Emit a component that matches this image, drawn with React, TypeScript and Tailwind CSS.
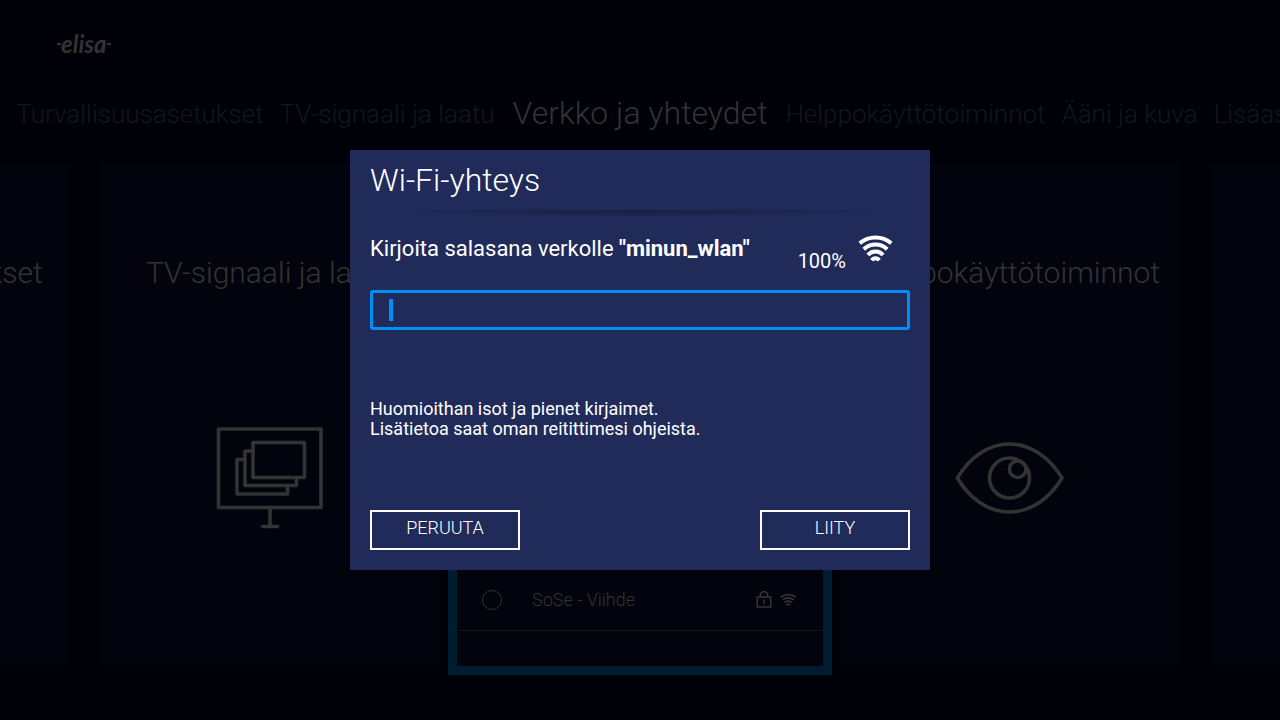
import { useState } from "react";
import type { ReactNode } from "react";
import clsx from "clsx";

const TABS_BEFORE = ["Turvallisuusasetukset", "TV-signaali ja laatu"];
const TABS_AFTER = ["Helppokäyttötoiminnot", "Ääni ja kuva", "Lisäasetukset"];

function WifiIcon({ className }: { className?: string }) {
  return (
    <svg viewBox="0 0 36 28" fill="none" stroke="currentColor" strokeWidth="4" className={className} aria-hidden="true">
      <path d="M1.7 9.2A24.5 24.5 0 0 1 33.3 9.2" />
      <path d="M5.8 15.2A16.8 16.8 0 0 1 29.2 15.2" />
      <path d="M9.9 21A9.8 9.8 0 0 1 25.1 21" />
      <path d="M13.9 26.4A4.2 4.2 0 0 1 21.1 26.4" />
    </svg>
  );
}

function LockIcon() {
  return (
    <svg viewBox="0 0 16 18" fill="none" stroke="currentColor" strokeWidth="1.6" className="h-[18px] w-4" aria-hidden="true">
      <rect x="1.3" y="6" width="13.4" height="10" />
      <path d="M4.3 6V4.3a3.7 3.7 0 0 1 7.4 0V6M8 8.5v5" />
    </svg>
  );
}

function ScreenIcon() {
  return (
    <svg viewBox="0 0 110 104" fill="none" stroke="currentColor" strokeWidth="3.6" strokeLinejoin="round" strokeLinecap="round" className="h-[104px] w-[110px]" aria-hidden="true">
      <rect x="3.5" y="3" width="102.5" height="78.5" />
      <rect x="38" y="16.5" width="51.5" height="35" />
      <path d="M38 25h-8v34.5h51.5v-8M30 33.5h-8V68h50.5v-8.5M55 82v18M47.5 100.5h15" />
    </svg>
  );
}

function EyeIcon() {
  return (
    <svg viewBox="0 0 110 104" fill="none" stroke="currentColor" strokeWidth="3.6" strokeLinejoin="round" className="h-[104px] w-[110px]" aria-hidden="true">
      <path d="M2.5 52C14 32 33 18 54.5 18S95 32 107 52C95 72 76 86 54.5 86S14 72 2.5 52Z" />
      <circle cx="54.5" cy="52" r="20" />
      <circle cx="62.7" cy="43.2" r="8.3" />
    </svg>
  );
}

function Card({ title, children }: { title: string; children?: ReactNode }) {
  return (
    <section className="flex h-[500px] w-[340px] shrink-0 flex-col items-center bg-[#03030d] pt-[86px] text-[#333333]">
      <h2 className="whitespace-nowrap text-[30px] leading-[44px]">{title}</h2>
      <div className="mt-[131px]">{children}</div>
    </section>
  );
}

function Tab({ label, active }: { label: string; active?: boolean }) {
  return (
    <a
      href="#"
      className={clsx(
        "whitespace-nowrap",
        active ? "text-[32px] leading-[42px] text-[#333333]" : "text-[26px] leading-[44px] text-[#15161b]"
      )}
    >
      {label}
    </a>
  );
}

function WifiDialog() {
  const [password, setPassword] = useState("");

  return (
    <div role="dialog" aria-labelledby="wifi-title" className="w-[580px] bg-[#212b5a] px-5 pb-5 font-normal text-white">
      <h1 id="wifi-title" className="h-[60px] text-[32px] leading-[60px] font-light">
        Wi-Fi-yhteys
      </h1>
      <div className="h-2 bg-[radial-gradient(ellipse_50%_100%_at_50%_0,#181f42,#1b234b_40%,#212b5a)]" />

      <div className="flex h-[72px] items-start justify-between pt-4 pr-4">
        <label htmlFor="password" className="text-[22px] leading-[30px]">
          Kirjoita salasana verkolle <b className="font-bold">"minun_wlan"</b>
        </label>
        <div className="flex items-start gap-3">
          <span className="pt-3 text-xl leading-[30px]">100%</span>
          <WifiIcon className="h-7 w-9" />
        </div>
      </div>

      <div className="flex h-10 items-center rounded-[3px] border-3 border-[#0090f5] pl-4">
        {password === "" && <span className="h-[22px] w-1 bg-[#0090f5]" />}
        <input
          id="password"
          type="text"
          value={password}
          onChange={(e) => setPassword(e.target.value)}
          className="h-full min-w-0 flex-1 bg-transparent text-[22px] caret-[#0090f5] outline-none"
        />
      </div>

      <p className="mt-[69px] text-lg leading-5">
        Huomioithan isot ja pienet kirjaimet.
        <br />
        Lisätietoa saat oman reitittimesi ohjeista.
      </p>

      <div className="mt-[71px] flex justify-between">
        <button type="button" className="flex h-10 w-[150px] justify-center border-2 border-white text-lg leading-8 font-light">
          PERUUTA
        </button>
        <button type="button" className="flex h-10 w-[150px] justify-center border-2 border-white text-lg leading-8 font-light">
          LIITY
        </button>
      </div>
    </div>
  );
}

export default function App() {
  return (
    <div className="min-h-screen overflow-hidden bg-[#000009] font-['Roboto','Noto_Sans',sans-serif] font-light">
      <header className="flex h-[92px] items-start pt-8 pl-[57px] text-[#333333]">
        <div className="flex items-center">
          <span className="h-[2px] w-1 bg-[#333333]" />
          <span className="font-['Lato',sans-serif] text-2xl leading-6 font-bold italic">elisa</span>
          <span className="h-[2px] w-1 bg-[#333333]" />
        </div>
      </header>

      <nav className="grid h-[63px] grid-cols-[minmax(0,1fr)_auto_minmax(0,1fr)] items-start gap-[18px]">
        <div className="flex justify-end gap-4">
          {TABS_BEFORE.map((label) => (
            <Tab key={label} label={label} />
          ))}
        </div>
        <Tab label="Verkko ja yhteydet" active />
        <div className="flex gap-4">
          {TABS_AFTER.map((label) => (
            <Tab key={label} label={label} />
          ))}
        </div>
      </nav>

      <main className="flex items-center justify-center gap-2">
        <div className="flex gap-[30px]">
          <Card title="Turvallisuusasetukset" />
          <Card title="TV-signaali ja laatu">
            <ScreenIcon />
          </Card>
        </div>

        {/* Focused card with the network list */}
        <section className="flex h-[520px] w-96 shrink-0 flex-col justify-end border-9 border-[#001d30] bg-[#03030d] pb-[35px] text-[#333333]">
          <label className="-mx-[5px] flex h-[61px] items-center border-b border-[#131416] pr-[31px] pb-px pl-[30px]">
            <input type="radio" name="network" className="size-5 appearance-none rounded-full border border-[#333333]" />
            <span className="ml-[30px] flex-1 text-lg">SoSe - Viihde</span>
            <LockIcon />
            <WifiIcon className="ml-2 h-[13px] w-[17px]" />
          </label>
        </section>

        <div className="flex gap-[30px]">
          <Card title="Helppokäyttötoiminnot">
            <EyeIcon />
          </Card>
          <Card title="Ääni ja kuva" />
        </div>
      </main>

      <div className="fixed inset-0 flex items-center justify-center">
        <WifiDialog />
      </div>
    </div>
  );
}
